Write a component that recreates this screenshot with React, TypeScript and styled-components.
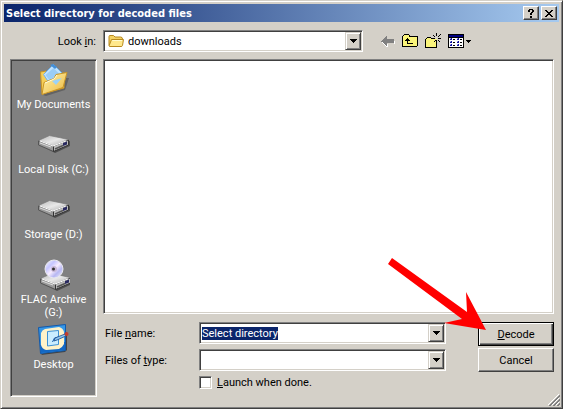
import React, { useEffect, useRef } from "react";
import styled, { createGlobalStyle, css } from "styled-components";

const face = "#d4d0c8";
const shade = "#808080";
const dark = "#404040";

const GlobalStyle = createGlobalStyle`
  * { box-sizing: border-box; }
  body { margin: 0; background: ${face}; }
  button, input, select { font: inherit; color: inherit; }
`;

const sunken = css`
  border: 1px solid;
  border-color: ${shade} #fff #fff ${shade};
  box-shadow: inset 1px 1px 0 ${dark}, inset -1px -1px 0 ${face};
`;

const raised = css`
  border: 1px solid;
  border-color: #fff ${dark} ${dark} #fff;
  box-shadow: inset -1px -1px 0 ${shade};
  background: ${face};
`;

const Dialog = styled.main`
  display: flex;
  flex-direction: column;
  min-height: 100vh;
  padding: 3px;
  background: ${face};
  border: 1px solid;
  border-color: ${face} ${dark} ${dark} ${face};
  box-shadow: inset 1px 1px 0 #fff, inset -1px -1px 0 ${shade};
  font: 11px/13px Roboto, "Liberation Sans", sans-serif;
  color: #000;
`;

const TitleBar = styled.header`
  display: flex;
  align-items: center;
  gap: 2px;
  height: 18px;
  padding: 0 2px;
  background: linear-gradient(to right, #0a246a, #a6caf0);
`;

const Title = styled.h1`
  flex: 1;
  margin: 0;
  padding-top: 2px;
  font: bold 11px/14px "DejaVu Sans Condensed", "DejaVu Sans", sans-serif;
  color: #fff;
  white-space: nowrap;
`;

const CaptionButton = styled.button`
  ${raised}
  display: grid;
  place-items: center;
  width: 16px;
  height: 14px;
  padding: 0;
`;

const Body = styled.div`
  flex: 1;
  display: grid;
  grid-template-columns: 87px minmax(0, 1fr);
  grid-template-rows: auto 1fr;
  gap: 7px 6px;
  padding: 8px 5px 8px 6px;
`;

const LookInLabel = styled.label`
  align-self: center;
  justify-self: end;
  margin-right: 1px;
`;

const LookInRow = styled.div`
  display: flex;
  align-items: center;
  gap: 18px;
`;

const Combo = styled.div`
  ${sunken}
  display: flex;
  align-items: center;
  flex: 1;
  min-width: 0;
  height: 22px;
  padding: 1px;
  background: #fff;
`;

const LookInCombo = styled(Combo)`
  flex: 0 1 260px;
  padding-left: 4px;
`;

const LookInSelect = styled.select`
  appearance: none;
  flex: 1;
  min-width: 0;
  height: 18px;
  padding: 0 4px;
  border: 0;
  outline: 0;
  background: transparent;
`;

const FileInput = styled.input`
  flex: 1;
  min-width: 0;
  height: 16px;
  padding: 0 1px;
  border: 0;
  outline: 0;
  background: transparent;
  &::selection {
    background: rgba(10, 36, 106, 0.996);
    color: #fff;
  }
`;

const TypeSelect = styled(LookInSelect)`
  padding: 0 2px;
`;

const DropButton = styled.button`
  ${raised}
  border-color: ${face} ${dark} ${dark} ${face};
  box-shadow: inset 1px 1px 0 #fff, inset -1px -1px 0 ${shade};
  display: grid;
  place-items: center;
  width: 16px;
  height: 18px;
  padding: 0;
`;

const Tools = styled.div`
  display: flex;
  align-items: center;
  gap: 7px;
`;

const ToolButton = styled.button`
  display: flex;
  padding: 0;
  border: 0;
  background: transparent;
`;

const Places = styled.nav`
  ${sunken}
  display: flex;
  flex-direction: column;
  padding: 4px 1px;
  background: ${shade};
`;

const Place = styled.button`
  display: flex;
  flex-direction: column;
  align-items: center;
  gap: 2px;
  min-height: 65px;
  padding: 0;
  border: 0;
  background: transparent;
  color: #fff;
  text-align: center;
`;

const Main = styled.div`
  display: flex;
  flex-direction: column;
  gap: 8px;
  padding-bottom: 6px;
`;

const FileList = styled.section`
  ${sunken}
  flex: 1;
  background: #fff;
`;

const Footer = styled.div`
  display: grid;
  grid-template-columns: minmax(0, 1fr) 76px;
  gap: 32px;
`;

const Fields = styled.div`
  display: grid;
  grid-template-columns: 94px minmax(0, 1fr);
  gap: 5px 2px;
  align-items: center;
`;

const FieldLabel = styled.label`
  padding-left: 2px;
`;

const CheckRow = styled.label`
  grid-column: 2;
  display: flex;
  align-items: center;
  gap: 5px;
  padding-bottom: 2px;
`;

const CheckBox = styled.input`
  ${sunken}
  appearance: none;
  width: 13px;
  height: 13px;
  margin: 0;
  background: #fff;
`;

const Actions = styled.div`
  position: relative;
  display: flex;
  flex-direction: column;
  gap: 2px;
`;

const ActionButton = styled.button<{ $default?: boolean }>`
  ${raised}
  height: 24px;
  padding: 0;
  ${(p) =>
    p.$default &&
    css`
      border-color: #000;
      box-shadow: inset 1px 1px 0 #fff, inset -1px -1px 0 ${dark},
        inset -2px -2px 0 ${shade};
    `}
`;

const Pointer = styled.svg`
  position: absolute;
  left: -92px;
  top: -65px;
  pointer-events: none;
`;

const Grip = styled.svg`
  position: absolute;
  right: 3px;
  bottom: 3px;
`;

const DownArrow = () => (
  <svg width="7" height="4" shapeRendering="crispEdges" aria-hidden="true">
    <path d="M0 0h7v1H0zM1 1h5v1H1zM2 2h3v1H2zM3 3h1v1H3z" />
  </svg>
);

const HelpGlyph = () => (
  <svg width="8" height="9" shapeRendering="crispEdges" aria-hidden="true">
    <path d="M2 0h4v1H2zM1 1h2v2H1zM5 1h2v2H5zM4 3h2v1H4zM3 4h2v2H3zM3 7h2v2H3z" />
  </svg>
);

const CloseGlyph = () => (
  <svg width="8" height="7" shapeRendering="crispEdges" aria-hidden="true">
    <path d="M0 0h2v1H0zM6 0h2v1H6zM1 1h2v1H1zM5 1h2v1H5zM2 2h4v1H2zM3 3h2v1H3zM2 4h4v1H2zM1 5h2v1H1zM5 5h2v1H5zM0 6h2v1H0zM6 6h2v1H6z" />
  </svg>
);

const BackIcon = () => (
  <svg width="14" height="16" shapeRendering="crispEdges" aria-hidden="true">
    <path d="M1 9h1v1h1v1h1v1h1v1h1v1h1v-3h7V8h-1v3H6v3H5v-1H4v-1H3v-1H2v-1H1z" fill="#fff" />
    <path d="M0 8h1V7h1V6h1V5h1V4h1V3h1v3h7v4H6v3H5v-1H4v-1H3v-1H2V9H0z" fill="#808080" />
  </svg>
);

const Dither = ({ id }: { id: string }) => (
  <defs>
    <pattern id={id} width="2" height="2" patternUnits="userSpaceOnUse">
      <rect width="2" height="2" fill="#ffff66" />
      <path d="M0 0h1v1H0zM1 1h1v1H1z" fill="#f4e890" />
    </pattern>
  </defs>
);

const UpIcon = () => (
  <svg width="16" height="16" shapeRendering="crispEdges" aria-hidden="true">
    <Dither id="up-fill" />
    <path d="M1 3h1V2h5v1h8v10H1z" fill="url(#up-fill)" />
    <path d="M2 1h5v1H2zM1 2h1v1H1zM7 2h1v1H7zM0 3h1v10H0zM7 3h8v1H7zM15 3h1v10h-1zM0 13h15v1H0zM5 5h1v1H5zM4 6h3v1H4zM3 7h5v1H3zM5 8h1v3H5zM5 10h6v1H5z" />
  </svg>
);

const NewFolderIcon = () => (
  <svg width="16" height="16" shapeRendering="crispEdges" aria-hidden="true">
    <Dither id="new-fill" />
    <path d="M1 6h1V5h4v1h6v8H1z" fill="url(#new-fill)" />
    <path d="M2 4h4v1H2zM1 5h1v1H1zM6 5h4v1H6zM0 6h1v9H0zM0 14h12v1H0zM11 9h1v6h-1zM11 0h1v3h-1zM8 2h1v1H8zM9 3h1v1H9zM15 1h1v1h-1zM14 2h1v1h-1zM13 3h1v1h-1zM13 5h3v1h-3zM10 7h1v1h-1zM9 8h1v1H9zM13 7h1v1h-1zM14 8h1v1h-1zM11 7h1v2h-1z" />
  </svg>
);

const ViewsIcon = () => (
  <svg width="26" height="16" shapeRendering="crispEdges" aria-hidden="true">
    <path d="M0 1h16v14H0z" />
    <path d="M1 2h14v2H1z" fill="#000080" />
    <path d="M1 5h14v9H1z" fill="#fff" />
    <path d="M2 5h2v2H2zM9 5h2v2H9zM2 8h2v2H2zM9 8h2v2H9zM2 11h2v2H2zM9 11h2v2H9z" fill="#10109c" />
    <path d="M2 5h1v1H2zM9 5h1v1H9zM2 8h1v1H2zM9 8h1v1H9zM2 11h1v1H2zM9 11h1v1H9z" fill="#a0a0e8" />
    <path d="M5 6h2v1H5zM12 6h2v1h-2zM5 9h2v1H5zM12 9h2v1h-2zM5 12h2v1H5zM12 12h2v1h-2zM18 7h5v1h-5zM19 8h3v1h-3zM20 9h1v1h-1z" />
  </svg>
);

const FolderIcon = () => (
  <svg width="16" height="16" viewBox="0 0 16 16" aria-hidden="true">
    <path d="M1 12.5V3.5Q1 2.500 2 2.500H5.500L7 4H12.500Q14.500 4 14.500 6V7" fill="#f4d264" stroke="#b88a20" />
    <path d="M1 13 3.500 6.500H15.500L14.500 12.500Q14.200 13.500 13 13.500H1.500Z" fill="#ffe88c" stroke="#b88a20" />
    <path d="M4.300 7.500H14" stroke="#fffbd0" />
  </svg>
);

const DocumentsIcon = () => (
  <svg width="32" height="32" viewBox="0 0 32 32" aria-hidden="true">
    <defs>
      <linearGradient id="doc-front" x1="0" y1="0" x2="1" y2="1">
        <stop offset="0" stopColor="#fff4b0" />
        <stop offset="1" stopColor="#edb83c" />
      </linearGradient>
    </defs>
    <path d="M5 31 8 32 27 26 31 14 28 14Z" fill="#404040" opacity=".45" />
    <path d="M2.500 8 8 7 12 10 26 9V24L4 30Z" fill="#f6cf59" stroke="#c99526" />
    <path d="m15.500.500 11 11-11 14-10-15Z" fill="#c0e3ff" stroke="#6fb0ea" />
    <path d="m15.500 4 8 8-8 10-8-11Z" fill="#9acdf7" />
    <path d="m12 1 3-1 4 3-2 2Z" fill="#438fd7" />
    <path d="m4 30.500 2-12 10-4 2-4 11-2-4 15Z" fill="url(#doc-front)" stroke="#c99526" />
    <path d="m14 17 10-3-6 7Z" fill="#9bd2f8" />
    <path d="m7 19 9-4 3-4" fill="none" stroke="#fffde0" />
  </svg>
);

const DriveShape = ({ id }: { id: string }) => (
  <>
    <defs>
      <linearGradient id={id} x1="0" y1="0" x2="1" y2="1">
        <stop offset="0" stopColor="#b8b8b8" />
        <stop offset=".5" stopColor="#e8e8e8" />
        <stop offset="1" stopColor="#aaa" />
      </linearGradient>
    </defs>
    <path d="m2 16 15 8 15-7v-5Z" fill="#333" opacity=".65" />
    <path d="m.500 11.500 15 5.500v5.500L.500 16Z" fill="#999" stroke="#555" />
    <path d="m15.500 17 15-6v5l-15 6.500Z" fill="#bbb" stroke="#333" />
    <path d="m.500 11.500 11-5 19 4-15 6.500Z" fill={`url(#${id})`} stroke="#777" strokeWidth=".7" />
    <path d="m2 12 13 5 13-5" fill="none" stroke="#fff" />
    <path d="m17 20 8-3.500" stroke="#555" strokeWidth="1.500" />
    <path d="m25 14 4-1.500v3L25 17Z" fill="#29295f" />
    <path d="M2 14 13 18" stroke="#ddd" />
  </>
);

const DriveIcon = ({ id }: { id: string }) => (
  <svg width="32" height="32" viewBox="0 0 32 32" aria-hidden="true">
    <DriveShape id={id} />
  </svg>
);

const OpticalIcon = () => (
  <svg width="32" height="32" viewBox="0 0 32 32" aria-hidden="true">
    <defs>
      <linearGradient id="disc" x1="0" y1="0" x2="1" y2="1">
        <stop offset="0" stopColor="#fff" />
        <stop offset=".3" stopColor="#c5c5ff" />
        <stop offset=".5" stopColor="#f8edff" />
        <stop offset=".7" stopColor="#b7b7f2" />
        <stop offset="1" stopColor="#fff" />
      </linearGradient>
    </defs>
    <g transform="translate(2 8)">
      <DriveShape id="optical" />
    </g>
    <circle cx="16" cy="10" r="9" fill="url(#disc)" stroke="#e9e9ef" />
    <circle cx="16" cy="10" r="3" fill="#c9b8d8" />
    <circle cx="15.500" cy="10" r="1.500" fill="#333" />
  </svg>
);

const DesktopIcon = () => (
  <svg width="32" height="32" viewBox="0 0 32 32" aria-hidden="true">
    <path d="m3 31 24-3 2-2V8Z" fill="#444" />
    <path d="m.500 3.500 27-3v26L2.500 29.500Z" fill="#3697e7" stroke="#1259aa" />
    <path d="M2 21 27 18v8L3 29Z" fill="#1268c5" />
    <path d="m7 5 14-2q4 1 5 5v12q-2 4-5 5L8 26q-4-1-5-5V9q1-3 4-4Z" fill="#fff3c9" />
    <path d="m9.500 7.500 11-1v14l-11 1.500Z" fill="#c9edff" stroke="#3d91d5" />
    <path d="m14.500 18 2-4 4-1" fill="none" stroke="#1259aa" />
    <path d="m17 14 10-4 1 2-9 4-3 1Z" fill="#8fc4ee" stroke="#164d8e" strokeWidth=".8" />
    <circle cx="28.500" cy="10" r="2" fill="#c33b2b" />
  </svg>
);

const places = [
  { label: "My Documents", icon: <DocumentsIcon /> },
  { label: "Local Disk (C:)", icon: <DriveIcon id="drive-c" /> },
  { label: "Storage (D:)", icon: <DriveIcon id="drive-d" /> },
  { label: "FLAC Archive (G:)", icon: <OpticalIcon /> },
  { label: "Desktop", icon: <DesktopIcon /> },
];

export default function App() {
  const fileName = useRef<HTMLInputElement>(null);

  useEffect(() => {
    fileName.current?.focus();
    fileName.current?.select();
  }, []);

  return (
    <>
      <GlobalStyle />
      <Dialog>
        <TitleBar>
          <Title>Select directory for decoded files</Title>
          <CaptionButton aria-label="Help"><HelpGlyph /></CaptionButton>
          <CaptionButton aria-label="Close"><CloseGlyph /></CaptionButton>
        </TitleBar>
        <Body>
          <LookInLabel htmlFor="look-in">Look <u>i</u>n:</LookInLabel>
          <LookInRow>
            <LookInCombo>
              <FolderIcon />
              <LookInSelect id="look-in"><option>downloads</option></LookInSelect>
              <DropButton aria-label="Show folders"><DownArrow /></DropButton>
            </LookInCombo>
            <Tools>
              <ToolButton aria-label="Back"><BackIcon /></ToolButton>
              <ToolButton aria-label="Up one level"><UpIcon /></ToolButton>
              <ToolButton aria-label="New folder"><NewFolderIcon /></ToolButton>
              <ToolButton aria-label="Views"><ViewsIcon /></ToolButton>
            </Tools>
          </LookInRow>
          <Places>
            {places.map((place) => (
              <Place key={place.label}>{place.icon}{place.label}</Place>
            ))}
          </Places>
          <Main>
            <FileList aria-label="Files" />
            <Footer>
              <Fields>
                <FieldLabel htmlFor="file-name">File <u>n</u>ame:</FieldLabel>
                <Combo>
                  <FileInput id="file-name" ref={fileName} defaultValue="Select directory" />
                  <DropButton aria-label="Show file names"><DownArrow /></DropButton>
                </Combo>
                <FieldLabel htmlFor="file-type">Files of <u>t</u>ype:</FieldLabel>
                <Combo>
                  <TypeSelect id="file-type"><option></option></TypeSelect>
                  <DropButton aria-label="Show file types"><DownArrow /></DropButton>
                </Combo>
                <CheckRow>
                  <CheckBox type="checkbox" />
                  <span><u>L</u>aunch when done.</span>
                </CheckRow>
              </Fields>
              <Actions>
                <ActionButton $default><u>D</u>ecode</ActionButton>
                <ActionButton>Cancel</ActionButton>
                <Pointer width="104" height="76" viewBox="386 257 104 76" aria-hidden="true">
                  <path d="m392 258 75 54-1-20 20 38-42-7 18-4-74-55Z" fill="#f00" />
                </Pointer>
              </Actions>
            </Footer>
          </Main>
        </Body>
        <Grip width="12" height="12" viewBox="0 0 12 12" aria-hidden="true">
          <path d="M0 11 11 0M4 11l7-7M8 11l3-3" stroke="#fff" />
          <path d="m1 12L12 1M2 12 12 2M5 12l7-7M6 12l6-6M9 12l3-3M10 12l2-2" stroke="#808080" />
        </Grip>
      </Dialog>
    </>
  );
}
